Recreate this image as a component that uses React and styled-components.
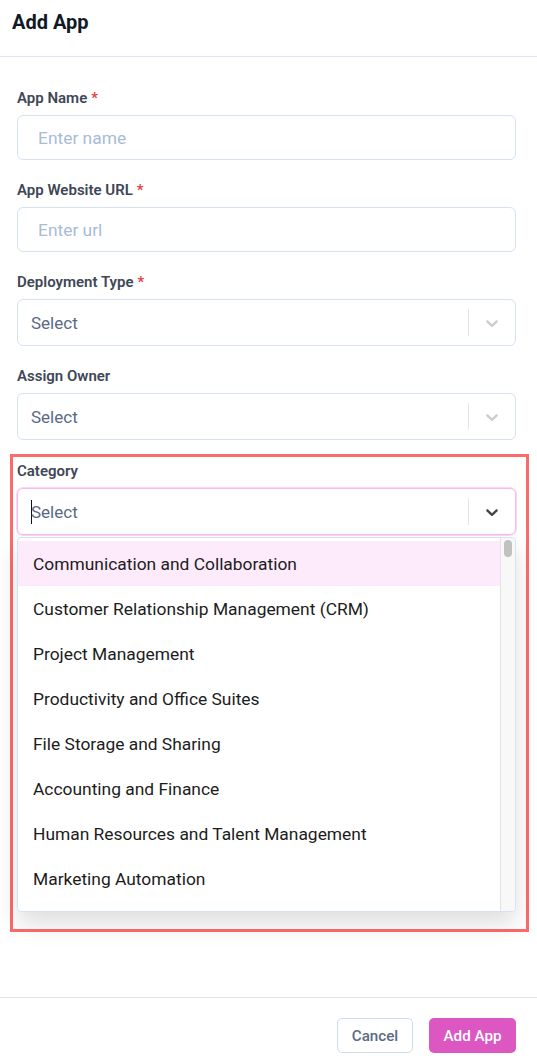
import styled, { createGlobalStyle } from "styled-components";

const categories = [
    "Communication and Collaboration",
    "Customer Relationship Management (CRM)",
    "Project Management",
    "Productivity and Office Suites",
    "File Storage and Sharing",
    "Accounting and Finance",
    "Human Resources and Talent Management",
    "Marketing Automation",
]

function Chevron({active}){
    return(
        <svg width="20" height="20" viewBox="0 0 20 20" fill={active ? "#444" : "#ccc"}>
            <path d="M4.516 7.548c0.436-0.446 1.043-0.481 1.576 0l3.908 3.747 3.908-3.747c0.533-0.481 1.141-0.446 1.574 0 0.436 0.445 0.408 1.197 0 1.615-0.406 0.418-4.695 4.502-4.695 4.502-0.217 0.223-0.502 0.335-0.787 0.335s-0.57-0.112-0.789-0.335c0 0-4.287-4.084-4.695-4.502s-0.436-1.17 0-1.615z"/>
        </svg>
    )
}

function SelectBox({focused}){
    return(
        <Select focused={focused}>
            <SelectValue>
                {focused && <Caret/>}
                Select
            </SelectValue>
            <Separator/>
            <Indicator><Chevron active={focused}/></Indicator>
        </Select>
    )
}

export default function App(){
    return(
        <Page>
            <Global/>
            <Header>Add App</Header>
            <Form>
                <Field>
                    <Label>App Name<Star>*</Star></Label>
                    <Input placeholder="Enter name"/>
                </Field>
                <Field>
                    <Label>App Website URL<Star>*</Star></Label>
                    <Input placeholder="Enter url"/>
                </Field>
                <Field>
                    <Label>Deployment Type<Star>*</Star></Label>
                    <SelectBox/>
                </Field>
                <Field>
                    <Label>Assign Owner</Label>
                    <SelectBox/>
                </Field>
                <Highlight>
                    <Label>Category</Label>
                    <SelectBox focused/>
                    <Menu>
                        <Options>
                            {categories.map((c,i)=>(
                                <Option key={c} active={i===0}>{c}</Option>
                            ))}
                        </Options>
                        <Track><Thumb/></Track>
                    </Menu>
                </Highlight>
            </Form>
            <Footer>
                <CancelButton>Cancel</CancelButton>
                <SubmitButton>Add App</SubmitButton>
            </Footer>
        </Page>
    )
}

const Global = createGlobalStyle`
    *{ box-sizing: border-box; }
    body{
        margin: 0;
        background: #fff;
        font-family: Roboto, "Noto Sans", sans-serif;
    }
`
const Page = styled.div`
    min-height: 100vh;
    display: flex;
    flex-direction: column;
`
const Header = styled.div`
    height: 57px;
    padding: 10px 12px 0;
    font-size: 20px;
    line-height: 24px;
    font-weight: 700;
    color: #111827;
    border-bottom: 1px solid #dde7f3;
`
const Form = styled.div`
    flex: 1;
    padding: 33px 21px 0 17px;
`
const Field = styled.div`
    margin-bottom: 22px;
`
const Label = styled.div`
    font-size: 15px;
    line-height: 17px;
    font-weight: 600;
    color: #3e4756;
    margin-bottom: 8px;
`
const Star = styled.span`
    color: #e53e3e;
    margin-left: 4px;
`
const Input = styled.input`
    display: block;
    width: 100%;
    height: 45px;
    border: 1px solid #d6e2f3;
    border-radius: 6px;
    padding: 0 20px;
    font-family: inherit;
    font-size: 17.4px;
    outline: none;
    &::placeholder{
        color: #a8bbd8;
    }
`
const Select = styled.div`
    height: 47px;
    display: flex;
    align-items: center;
    border: 1px solid ${p => p.focused ? "#f8b9ec" : "#d6e2f3"};
    border-radius: 6px;
    ${p => p.focused && "box-shadow: 0 0 0 1px #fcd7f5;"}
`
const SelectValue = styled.div`
    flex: 1;
    display: flex;
    align-items: center;
    padding-left: 13px;
    font-size: 17px;
    color: #5a6a85;
`
const Caret = styled.span`
    width: 1px;
    height: 24px;
    background: #111;
    margin-right: -1px;
`
const Separator = styled.span`
    width: 1px;
    height: 27px;
    background: #dfe6ef;
`
const Indicator = styled.div`
    width: 46px;
    display: flex;
    justify-content: center;
    svg{ display: block; }
`
const Highlight = styled.div`
    margin: -8px -13px 0 -7px;
    padding: 6px 10px 17px 4px;
    border: 3px solid #fb6b6b;
`
const Menu = styled.div`
    margin-top: 2px;
    height: 375px;
    display: flex;
    border: 1px solid #d6e2f3;
    border-radius: 4px;
    overflow: hidden;
    background: #fff;
    box-shadow: 0 12px 24px rgba(0,0,0,0.13);
`
const Options = styled.div`
    flex: 1;
    padding-top: 3px;
    overflow: hidden;
`
const Option = styled.div`
    height: 45px;
    display: flex;
    align-items: center;
    padding-left: 15px;
    font-size: 17.4px;
    color: #1c1c1c;
    background: ${p => p.active ? "#fdebfb" : "#fff"};
`
const Track = styled.div`
    width: 15px;
    background: #f8f8f8;
    border-left: 1px solid #e4e4e4;
    padding: 2px 3px;
`
const Thumb = styled.div`
    height: 17px;
    border-radius: 4px;
    background: #c1c1c1;
`
const Footer = styled.div`
    border-top: 1px solid #dbe4f0;
    padding: 20px 21px 10px;
    display: flex;
    justify-content: flex-end;
    gap: 16px;
`
const CancelButton = styled.button`
    height: 35px;
    width: 76px;
    border: 1px solid #cddcf0;
    border-radius: 5px;
    background: #fff;
    font-family: inherit;
    font-size: 15.2px;
    font-weight: 500;
    color: #5a6a85;
`
const SubmitButton = styled.button`
    height: 35px;
    width: 87px;
    border: none;
    border-radius: 5px;
    background: #dd57c3;
    font-family: inherit;
    font-size: 15.2px;
    font-weight: 500;
    color: #fff;
`
